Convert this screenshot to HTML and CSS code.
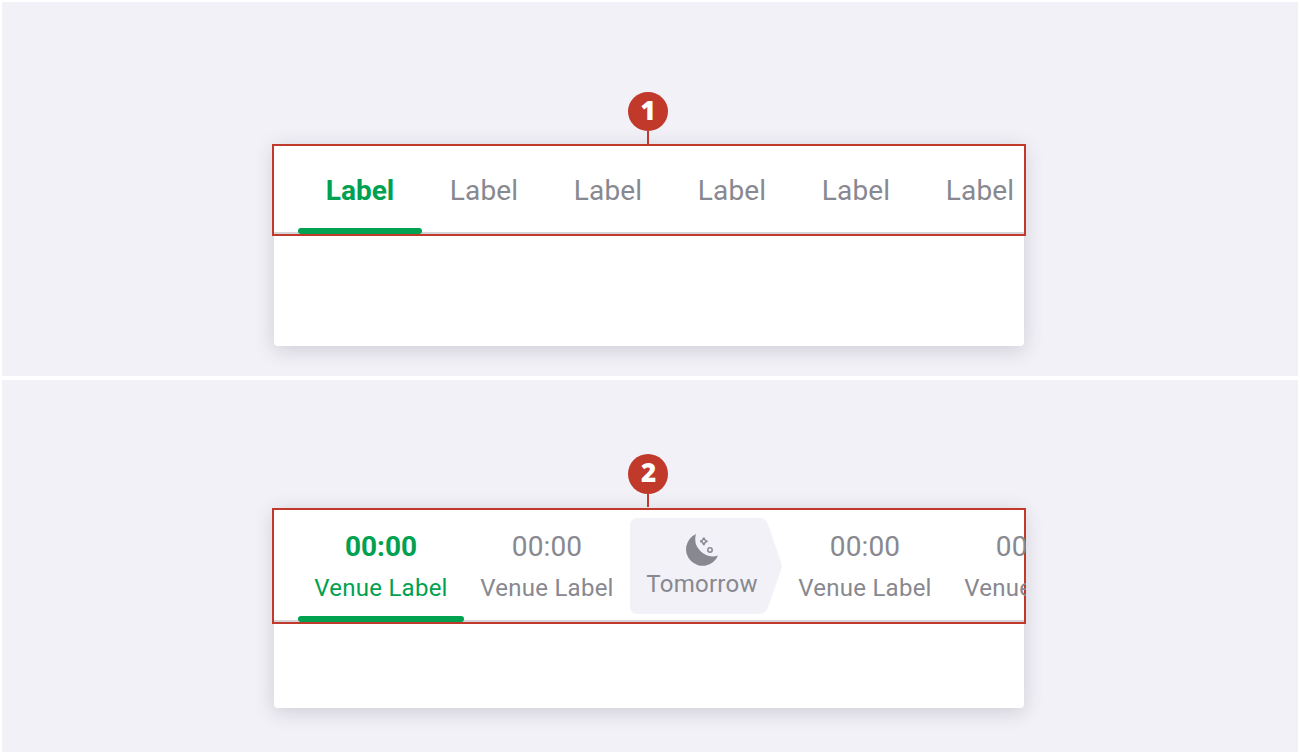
FILE: index.html
```html
<!DOCTYPE html>
<html lang="en">
<head>
<meta charset="utf-8">
<title>Tabs</title>
<link rel="stylesheet" href="styles.css">
</head>
<body>
<section class="panel panel-label">
  <div class="callout"><span class="badge">1</span><span class="stem"></span></div>
  <div class="card">
    <nav class="tabs">
      <div class="tab active"><span class="label">Label</span></div>
      <div class="tab"><span class="label">Label</span></div>
      <div class="tab"><span class="label">Label</span></div>
      <div class="tab"><span class="label">Label</span></div>
      <div class="tab"><span class="label">Label</span></div>
      <div class="tab"><span class="label">Label</span></div>
    </nav>
  </div>
</section>
<section class="panel panel-venue">
  <div class="callout"><span class="badge">2</span><span class="stem"></span></div>
  <div class="card">
    <nav class="tabs">
      <div class="tab active"><span class="time">00:00</span><span class="venue">Venue Label</span></div>
      <div class="tab"><span class="time">00:00</span><span class="venue">Venue Label</span></div>
      <div class="day">
        <svg class="day-shape" width="152" height="96" viewBox="0 0 152 96"><path d="M8 0H129.500Q135.500 0 138 6.500L151 44Q152.400 48 151 52L138 89.500Q135.500 96 129.500 96H8Q0 96 0 88V8Q0 0 8 0Z"/></svg>
        <svg class="moon" width="34" height="34" viewBox="0 0 34 34"><path class="moon-fill" d="M11 1A16.600 16.600 0 1 0 33 22.500A17.500 17.500 0 0 1 11 1Z"/><path class="moon-line" d="M18.800 4.600Q19.400 7.700 22.500 8.300Q19.400 8.900 18.800 12Q18.200 8.900 15.100 8.300Q18.200 7.700 18.800 4.600Z"/><circle class="moon-line" cx="25" cy="17" r="2.200"/></svg>
        <span class="day-name">Tomorrow</span>
      </div>
      <div class="tab"><span class="time">00:00</span><span class="venue">Venue Label</span></div>
      <div class="tab"><span class="time">00:00</span><span class="venue">Venue Label</span></div>
    </nav>
  </div>
</section>
</body>
</html>
```

FILE: styles.css
```css
* { box-sizing: border-box; }

body {
  margin: 0;
  padding: 2px;
  height: 754px;
  display: flex;
  flex-direction: column;
  gap: 4px;
  overflow: hidden;
  background: #fff;
  font-family: Roboto, "Liberation Sans", sans-serif;
  color: #888890;
}

.panel {
  display: flex;
  flex-direction: column;
  align-items: center;
  background: #f2f1f7;
}
.panel-label { height: 374px; padding-top: 90px; }
.panel-venue { height: 372px; padding-top: 74px; }

.callout {
  display: flex;
  flex-direction: column;
  align-items: center;
  width: 754px;
  padding-right: 4px;
  position: relative;
  z-index: 1;
}
.panel-label .callout { height: 52px; }
.panel-venue .callout { height: 54px; }
.badge {
  width: 40px;
  height: 40px;
  padding-left: 1px;
  border-radius: 50%;
  background: #c1392b;
  color: #fff;
  font: 800 26px/36px "Open Sans", sans-serif;
  text-align: center;
}
.panel-label .badge { padding-left: 0; }
.stem { width: 2px; height: 13px; background: #c1392b; }

.card {
  width: 750px;
  margin-right: 2px;
  border-radius: 4px;
  background: #fff;
  box-shadow: 0 4px 20px rgba(60, 60, 80, 0.2);
}
.panel-label .card { height: 202px; }
.panel-venue .card { height: 200px; }

.tabs {
  display: flex;
  width: 754px;
  margin-left: -2px;
  padding: 2px 0 2px 26px;
  overflow: hidden;
  background: linear-gradient(#d5d5d9, #d5d5d9) 0 calc(100% - 2px) / 100% 2px no-repeat, #fff;
  box-shadow: inset 0 0 0 2px #c1392b;
}
.panel-label .tabs { height: 92px; }
.panel-venue .tabs { height: 116px; }

.tab {
  flex: none;
  display: flex;
  flex-direction: column;
  align-items: center;
  position: relative;
  white-space: nowrap;
}
.panel-label .tab { width: 124px; padding-top: 28px; }
.panel-venue .tab { width: 166px; padding-top: 20px; }
.tab.active { color: #00a150; }
.tab.active::after {
  content: "";
  position: absolute;
  inset: auto 0 0;
  height: 6px;
  border-radius: 3px;
  background: #00a150;
}
.label, .time { font-size: 28px; line-height: 33px; letter-spacing: 0.15px; }
.active .label, .active .time { font-weight: 700; letter-spacing: 0; }
.venue, .day-name { font-size: 24px; line-height: 28px; letter-spacing: 0.25px; }
.venue { margin-top: 11px; }

.day {
  flex: none;
  display: flex;
  flex-direction: column;
  align-items: center;
  width: 152px;
  height: 96px;
  margin-top: 8px;
  padding: 15px 8px 0 0;
  position: relative;
}
.day-shape { position: absolute; left: 0; top: 0; fill: #f2f1f7; }
.moon { position: relative; }
.day-name { position: relative; margin-top: 3px; }
.moon-fill { fill: #888890; }
.moon-line { fill: none; stroke: #888890; stroke-width: 1.500; }
```
